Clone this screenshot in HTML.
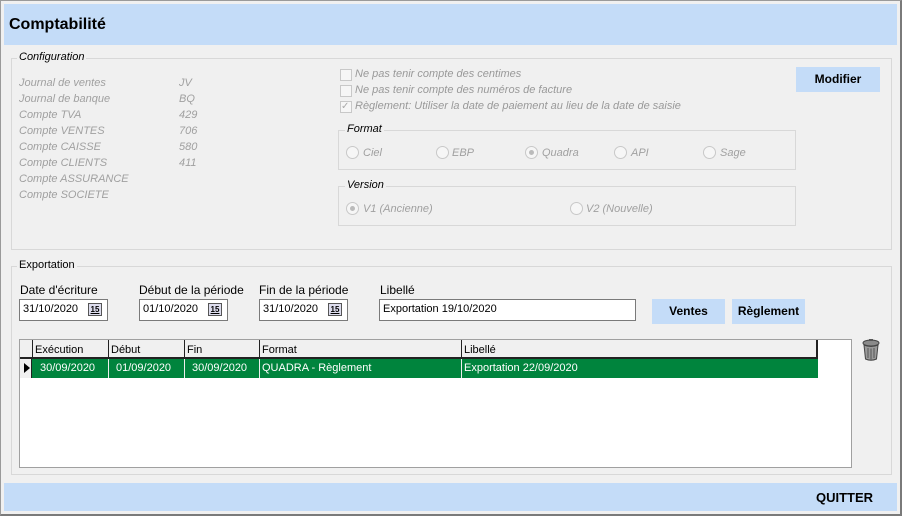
<!DOCTYPE html>
<html><head><meta charset="utf-8"><style>
*{box-sizing:border-box;margin:0;padding:0}
body{width:902px;height:516px;background:#f0f0f0;font-family:"Liberation Sans",sans-serif;font-size:11px;color:#000;position:relative;overflow:hidden}
.a{position:absolute;white-space:nowrap}
.frame{position:absolute;left:0;top:0;width:902px;height:516px;border:1px solid #9a9a9a;border-right:2px solid #7a7a7a;border-bottom:2px solid #7a7a7a}
.band{position:absolute;left:4px;width:893px;background:#c4dcf8}
.gb{position:absolute;border:1px solid #d8d8d8}
.gt{position:absolute;background:#f0f0f0;padding:0 2px;font-size:11px}
.it{font-style:italic;color:#a0a0a0}
.cb{position:absolute;width:12px;height:12px;border:1px solid #c8c8c8;background:#f6f6f6}
.rd{position:absolute;width:13px;height:13px;border:1px solid #c8c8c8;border-radius:50%;background:#f6f6f6}
.rd.on::after{content:"";position:absolute;left:3px;top:3px;width:5px;height:5px;border-radius:50%;background:#bbb}
.btn{position:absolute;background:#c4dcf8;font-weight:bold;text-align:center;font-size:12px}
.inp{position:absolute;height:22px;border:1px solid #7a7a7a;background:#fff;padding:3px 0 0 3px;font-size:11px}
.cal{position:absolute;top:3px;width:14px;height:13px;border:1px solid #555;background:#dde;font-size:8px;font-weight:bold;text-align:center;line-height:11px;text-decoration:underline}
</style></head><body>
<div class="frame"></div>
<div class="band" style="top:4px;height:41px"></div>
<div class="a" style="left:9px;top:16px;font-size:16px;font-weight:bold">Comptabilité</div>

<div class="gb" style="left:11px;top:58px;width:881px;height:192px"></div>
<div class="gt it" style="left:17px;top:51px;color:#000">Configuration</div>
<div class="a it" style="left:19px;top:75px;line-height:16px">Journal de ventes<br>Journal de banque<br>Compte TVA<br>Compte VENTES<br>Compte CAISSE<br>Compte CLIENTS<br>Compte ASSURANCE<br>Compte SOCIETE</div>
<div class="a it" style="left:179px;top:75px;line-height:16px">JV<br>BQ<br>429<br>706<br>580<br>411</div>

<div class="cb" style="left:340px;top:69px"></div>
<div class="a it" style="left:355px;top:68px;color:#999">Ne pas tenir compte des centimes</div>
<div class="cb" style="left:340px;top:85px"></div>
<div class="a it" style="left:355px;top:84px;color:#999">Ne pas tenir compte des numéros de facture</div>
<div class="cb" style="left:340px;top:101px;font-size:10px;color:#aaa;line-height:10px;font-style:normal">✓</div>
<div class="a it" style="left:355px;top:100px;color:#999">Règlement: Utiliser la date de paiement au lieu de la date de saisie</div>

<div class="btn" style="left:796px;top:67px;width:84px;height:25px;line-height:25px">Modifier</div>

<div class="gb" style="left:338px;top:130px;width:458px;height:40px"></div>
<div class="gt it" style="left:345px;top:123px;color:#000">Format</div>
<div class="rd" style="left:346px;top:146px"></div><div class="a it" style="left:363px;top:147px">Ciel</div>
<div class="rd" style="left:436px;top:146px"></div><div class="a it" style="left:452px;top:147px">EBP</div>
<div class="rd on" style="left:525px;top:146px"></div><div class="a it" style="left:542px;top:147px">Quadra</div>
<div class="rd" style="left:614px;top:146px"></div><div class="a it" style="left:631px;top:147px">API</div>
<div class="rd" style="left:703px;top:146px"></div><div class="a it" style="left:720px;top:147px">Sage</div>

<div class="gb" style="left:338px;top:186px;width:458px;height:40px"></div>
<div class="gt it" style="left:345px;top:179px;color:#000">Version</div>
<div class="rd on" style="left:346px;top:202px"></div><div class="a it" style="left:363px;top:203px">V1 (Ancienne)</div>
<div class="rd" style="left:570px;top:202px"></div><div class="a it" style="left:586px;top:203px">V2 (Nouvelle)</div>

<div class="gb" style="left:11px;top:266px;width:881px;height:209px"></div>
<div class="gt" style="left:17px;top:259px">Exportation</div>

<div class="a" style="left:20px;top:283px;font-size:12px">Date d'écriture</div>
<div class="a" style="left:139px;top:283px;font-size:12px">Début de la période</div>
<div class="a" style="left:259px;top:283px;font-size:12px">Fin de la période</div>
<div class="a" style="left:380px;top:283px;font-size:12px">Libellé</div>

<div class="inp" style="left:19px;top:299px;width:89px">31/10/2020<div class="cal" style="left:68px">15</div></div>
<div class="inp" style="left:139px;top:299px;width:89px">01/10/2020<div class="cal" style="left:68px">15</div></div>
<div class="inp" style="left:259px;top:299px;width:89px">31/10/2020<div class="cal" style="left:68px">15</div></div>
<div class="inp" style="left:379px;top:299px;width:257px">Exportation 19/10/2020</div>

<div class="btn" style="left:652px;top:299px;width:73px;height:25px;line-height:25px">Ventes</div>
<div class="btn" style="left:732px;top:299px;width:73px;height:25px;line-height:25px">Règlement</div>

<div class="a" style="left:19px;top:339px;width:833px;height:129px;background:#fff;border:1px solid #a0a0a0"></div>
<div class="a" style="left:20px;top:340px;width:798px;height:19px;background:#f0f0f0;border-bottom:2px solid #222;border-right:2px solid #222"></div>
<div class="a" style="left:20px;top:359px;width:12px;height:19px;background:#f0f0f0;border-right:1px solid #222"></div>
<div class="a" style="left:24px;top:363px;width:0;height:0;border-top:5px solid transparent;border-bottom:5px solid transparent;border-left:6px solid #000"></div>
<div class="a" style="left:32px;top:359px;width:786px;height:19px;background:#00843d"></div>
<div class="a" style="left:32px;top:340px;height:19px;border-left:1px solid #222"></div>
<div class="a" style="left:108px;top:340px;height:38px;border-left:1px solid #eee"></div>
<div class="a" style="left:108px;top:340px;height:19px;border-left:1px solid #222"></div>
<div class="a" style="left:184px;top:340px;height:38px;border-left:1px solid #eee"></div>
<div class="a" style="left:184px;top:340px;height:19px;border-left:1px solid #222"></div>
<div class="a" style="left:259px;top:340px;height:38px;border-left:1px solid #eee"></div>
<div class="a" style="left:259px;top:340px;height:19px;border-left:1px solid #222"></div>
<div class="a" style="left:461px;top:340px;height:38px;border-left:1px solid #eee"></div>
<div class="a" style="left:461px;top:340px;height:19px;border-left:1px solid #222"></div>
<div class="a" style="left:35px;top:344px">Exécution</div>
<div class="a" style="left:111px;top:344px">Début</div>
<div class="a" style="left:187px;top:344px">Fin</div>
<div class="a" style="left:262px;top:344px">Format</div>
<div class="a" style="left:464px;top:344px">Libellé</div>
<div class="a" style="left:40px;top:362px;color:#fff">30/09/2020</div>
<div class="a" style="left:116px;top:362px;color:#fff">01/09/2020</div>
<div class="a" style="left:192px;top:362px;color:#fff">30/09/2020</div>
<div class="a" style="left:262px;top:362px;color:#fff">QUADRA - Règlement</div>
<div class="a" style="left:464px;top:362px;color:#fff">Exportation 22/09/2020</div>

<svg class="a" style="left:860px;top:338px" width="22" height="24" viewBox="0 0 22 24">
<ellipse cx="11" cy="5" rx="8" ry="3" fill="#8a8a8a" stroke="#444"/>
<rect x="9" y="1" width="4" height="2" fill="#555"/>
<path d="M4 7 L5.5 21 Q11 23.5 16.5 21 L18 7 Q11 10 4 7Z" fill="#9a9a9a" stroke="#444"/>
<path d="M8 10v10M11 10.5v11M14 10v10" stroke="#555"/>
</svg>

<div class="band" style="top:483px;height:28px"></div>
<div class="a" style="left:816px;top:490px;font-size:13px;font-weight:bold">QUITTER</div>
</body></html>
